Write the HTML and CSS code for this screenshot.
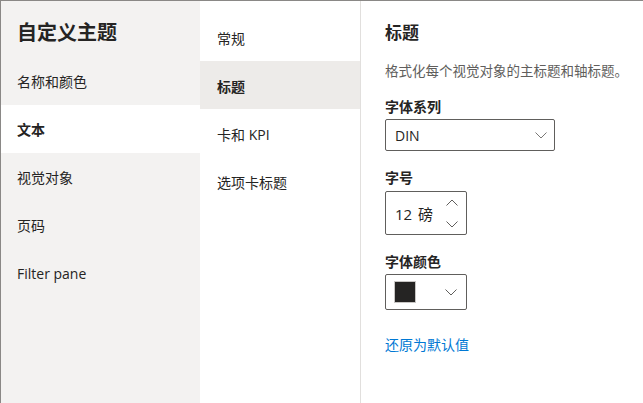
FILE: index.html
```html
<!DOCTYPE html>
<html lang="zh-CN">
<head>
<meta charset="utf-8">
<link rel="stylesheet" href="styles.css">
</head>
<body>
<div class="frame">
  <nav class="nav">
    <div class="nav-title">自定义主题</div>
    <div class="nav-item">名称和颜色</div>
    <div class="nav-item active">文本</div>
    <div class="nav-item">视觉对象</div>
    <div class="nav-item">页码</div>
    <div class="nav-item">Filter pane</div>
  </nav>
  <div class="sub">
    <div class="sub-item">常规</div>
    <div class="sub-item active">标题</div>
    <div class="sub-item">卡和 KPI</div>
    <div class="sub-item">选项卡标题</div>
  </div>
  <main class="content">
    <h2 class="heading">标题</h2>
    <p class="desc">格式化每个视觉对象的主标题和轴标题。</p>
    <div class="label label-family">字体系列</div>
    <div class="dropdown">
      <span>DIN</span>
      <svg class="chev" width="12" height="7" viewBox="0 0 12 7"><polyline points="0.5,0.5 6,6 11.5,0.5" fill="none" stroke="#797775" stroke-width="1"/></svg>
    </div>
    <div class="label label-size">字号</div>
    <div class="spin">
      <span class="spin-val">12 磅</span>
      <div class="spin-arrows">
        <svg width="12" height="7" viewBox="0 0 12 7"><polyline points="0.5,6.5 6,1 11.5,6.5" fill="none" stroke="#605e5c" stroke-width="1"/></svg>
        <svg width="12" height="7" viewBox="0 0 12 7"><polyline points="0.5,0.5 6,6 11.5,0.5" fill="none" stroke="#605e5c" stroke-width="1"/></svg>
      </div>
    </div>
    <div class="label label-color">字体颜色</div>
    <div class="color-pick">
      <span class="swatch"></span>
      <svg class="chev" width="12" height="7" viewBox="0 0 12 7"><polyline points="0.5,0.5 6,6 11.5,0.5" fill="none" stroke="#605e5c" stroke-width="1"/></svg>
    </div>
    <a class="reset" href="#">还原为默认值</a>
  </main>
</div>
</body>
</html>
```
FILE: styles.css
```css
* { box-sizing: border-box; }
html, body {
  margin: 0;
  padding: 0;
  background: #fff;
}
body {
  font-family: "Open Sans", "Noto Sans CJK SC", sans-serif;
  color: #252423;
  font-size: 14px;
}
.frame {
  display: flex;
  width: 643px;
  height: 403px;
  border-top: 1px solid #8a8886;
  border-left: 1px solid #8a8886;
}
.nav {
  width: 199px;
  flex: none;
  background: #f3f2f1;
}
.nav-title {
  height: 56px;
  padding: 18px 0 0 16px;
  font-size: 20px;
  line-height: 28px;
  font-weight: 700;
}
.nav-item {
  height: 48px;
  padding: 2px 0 0 16px;
  display: flex;
  align-items: center;
  line-height: 20px;
}
.nav-item.active {
  background: #fff;
  font-weight: 700;
}
.sub {
  width: 161px;
  flex: none;
  border-right: 1px solid #e1dfdd;
  padding-top: 12px;
}
.sub-item {
  height: 48px;
  padding: 2px 0 0 17px;
  display: flex;
  align-items: center;
}
.sub-item.active {
  background: #edebe9;
  font-weight: 700;
}
.content {
  flex: 1;
  padding: 20px 0 0 24px;
  display: flex;
  flex-direction: column;
  align-items: flex-start;
}
.heading {
  margin: 0;
  font-size: 17px;
  line-height: 24px;
  font-weight: 700;
}
.desc {
  margin: 16px 0 0;
  font-size: 13.5px;
  line-height: 20px;
  color: #605e5c;
}
.label {
  font-weight: 700;
  line-height: 20px;
}
.label-family { margin-top: 16px; }
.label-size { margin-top: 17px; }
.label-color { margin-top: 17px; }
.dropdown {
  margin-top: 2px;
  width: 170px;
  height: 32px;
  border: 1px solid #605e5c;
  border-radius: 2px;
  display: flex;
  align-items: center;
  justify-content: space-between;
  padding: 0 7px 0 9px;
}
.spin {
  margin-top: 3px;
  width: 82px;
  height: 44px;
  border: 1px solid #605e5c;
  border-radius: 2px;
  display: flex;
  align-items: center;
  justify-content: space-between;
  padding: 0 8px 0 9px;
}
.spin-val {
  font-size: 15px;
  word-spacing: 2px;
}
.spin-arrows {
  display: flex;
  flex-direction: column;
  gap: 15px;
}
.spin-arrows svg { display: block; }
.color-pick {
  margin-top: 2px;
  width: 82px;
  height: 36px;
  border: 1px solid #605e5c;
  border-radius: 2px;
  display: flex;
  align-items: center;
  justify-content: space-between;
  padding: 0 9px 0 8px;
}
.swatch {
  width: 22px;
  height: 22px;
  background: #252423;
  border: 1px solid #c8c6c4;
}
.chev { display: block; }
.reset {
  margin-top: 25px;
  color: #0078d4;
  text-decoration: none;
  line-height: 20px;
}
```
